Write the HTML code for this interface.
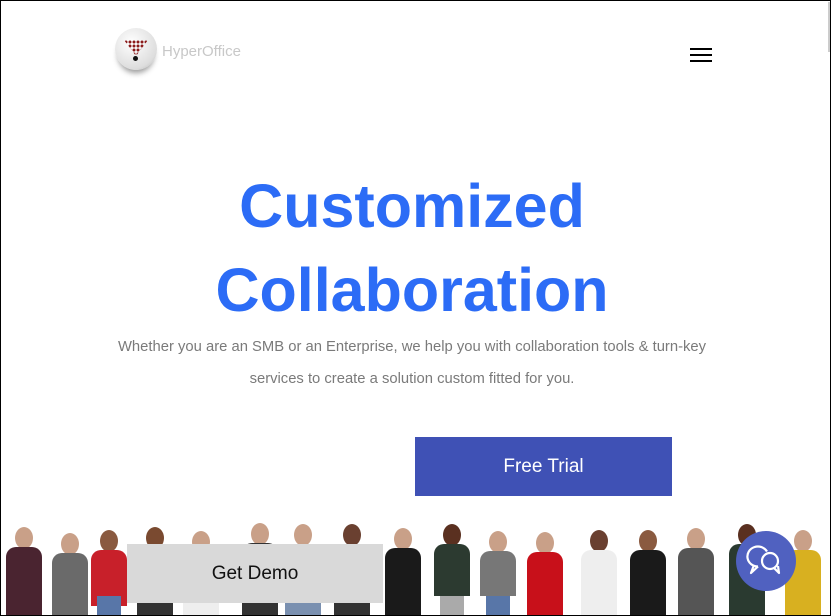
<!DOCTYPE html>
<html><head><style>
body{margin:0;width:831px;height:616px;overflow:hidden;background:#fff;font-family:"Liberation Sans",sans-serif;position:relative}
.frame{position:absolute;left:0;top:0;width:829px;height:614px;border:1px solid #000;pointer-events:none;z-index:10}
.a{position:absolute}
h1{position:absolute;left:0;width:824px;text-align:center;margin:0;color:#2c6cf6;font-size:61px;font-weight:bold;letter-spacing:0}
.sub{position:absolute;left:0;width:824px;text-align:center;color:#7a7a7a;font-size:14.8px;line-height:32px;top:331px}
.p{position:absolute}
.p .h{position:absolute;width:18px;height:22px;border-radius:50%;background:#c9a088;left:50%;margin-left:-9px}
.p .b{position:absolute;width:36px;left:50%;margin-left:-18px;border-radius:10px 10px 0 0}
.p .l{position:absolute;width:24px;left:50%;margin-left:-12px;height:20px;bottom:0;background:#5876a8}
</style></head><body>
<div class="frame"></div>
<div class="a" style="left:828px;top:2px;width:3px;height:50px;background:#ccc"></div>
<div class="a" style="left:115px;top:28px;width:42px;height:42px;border-radius:50%;background:radial-gradient(circle at 40% 35%,#fff,#ddd 70%,#aaa);box-shadow:0 6px 6px -3px #999"></div>
<div class="a" style="left:124px;top:40px;width:24px;height:16px;background:radial-gradient(#8b1a1a 1.3px,transparent 1.6px) 0 0/4px 4px;clip-path:polygon(0 0,100% 0,50% 100%)"></div>
<div class="a" style="left:133px;top:56px;width:5px;height:5px;border-radius:50%;background:#111"></div>
<div class="a" style="left:162px;top:43px;color:#c8c8c8;font-size:15px">HyperOffice</div>
<div class="a" style="left:690px;top:48px;width:22px;height:2px;background:#000;box-shadow:0 6px 0 #000,0 12px 0 #000"></div>
<h1 style="top:171px">Customized</h1>
<h1 style="top:255px">Collaboration</h1>
<div class="sub">Whether you are an SMB or an Enterprise, we help you with collaboration tools &amp; turn-key<br>services to create a solution custom fitted for you.</div>
<div class="a" style="left:415px;top:437px;width:257px;height:59px;background:#3f51b5;color:#fff;font-size:19px;line-height:59px;text-align:center;font-weight:500">Free Trial</div>

<div class="p" style="left:6px;top:527px;width:36px;height:89px"><div class="h"></div><div class="b" style="top:20px;height:69px;background:#4a2430"></div></div>
<div class="p" style="left:52px;top:533px;width:36px;height:83px"><div class="h"></div><div class="b" style="top:20px;height:63px;background:#6a6a6a"></div></div>
<div class="p" style="left:91px;top:530px;width:36px;height:86px"><div class="h" style="background:#8a5a40"></div><div class="b" style="top:20px;height:56px;background:#c8202a"></div><div class="l"></div></div>
<div class="p" style="left:137px;top:527px;width:36px;height:89px"><div class="h" style="background:#7a4a30"></div><div class="b" style="top:20px;height:69px;background:#333"></div></div>
<div class="p" style="left:183px;top:531px;width:36px;height:85px"><div class="h"></div><div class="b" style="top:20px;height:65px;background:#eee"></div></div>
<div class="p" style="left:242px;top:523px;width:36px;height:93px"><div class="h"></div><div class="b" style="top:20px;height:73px;background:#333"></div></div>
<div class="p" style="left:285px;top:524px;width:36px;height:92px"><div class="h"></div><div class="b" style="top:20px;height:72px;background:#7a90b0"></div></div>
<div class="p" style="left:334px;top:524px;width:36px;height:92px"><div class="h" style="background:#6a4030"></div><div class="b" style="top:20px;height:72px;background:#333"></div></div>
<div class="p" style="left:385px;top:528px;width:36px;height:88px"><div class="h"></div><div class="b" style="top:20px;height:68px;background:#1a1a1a"></div></div>
<div class="p" style="left:432px;top:524px;width:40px;height:92px"><div class="h" style="background:#5a3020"></div><div class="b" style="top:20px;height:52px;background:#2c3a30"></div><div class="l" style="background:#aaa"></div></div>
<div class="p" style="left:480px;top:531px;width:36px;height:85px"><div class="h"></div><div class="b" style="top:20px;height:45px;background:#777"></div><div class="l"></div></div>
<div class="p" style="left:527px;top:532px;width:36px;height:84px"><div class="h"></div><div class="b" style="top:20px;height:64px;background:#c8101a"></div></div>
<div class="p" style="left:581px;top:530px;width:36px;height:86px"><div class="h" style="background:#6a4030"></div><div class="b" style="top:20px;height:66px;background:#eee"></div></div>
<div class="p" style="left:630px;top:530px;width:36px;height:86px"><div class="h" style="background:#8a5a40"></div><div class="b" style="top:20px;height:66px;background:#1a1a1a"></div></div>
<div class="p" style="left:676px;top:528px;width:40px;height:88px"><div class="h"></div><div class="b" style="top:20px;height:68px;background:#555"></div></div>
<div class="p" style="left:729px;top:524px;width:36px;height:92px"><div class="h" style="background:#5a3020"></div><div class="b" style="top:20px;height:72px;background:#2a3a30"></div></div>
<div class="p" style="left:785px;top:530px;width:36px;height:86px"><div class="h"></div><div class="b" style="top:20px;height:66px;background:#d8b020"></div></div>

<div class="a" style="left:127px;top:544px;width:256px;height:59px;background:#d9d9d9;color:#111;font-size:19px;line-height:59px;text-align:center">Get Demo</div>
<div class="a" style="left:736px;top:531px;width:60px;height:60px;border-radius:50%;background:#5061c0">
<svg width="60" height="60" viewBox="0 0 60 60" fill="none" stroke="#fff" stroke-width="2.2" stroke-linejoin="round"><path d="M22 35.5A10.5 10 0 1 1 31 20.5"/><path d="M22 35.5L15 42l3-8"/><circle cx="34" cy="30" r="8"/><path d="M38 37l5 5-1-7"/></svg></div>
</body></html>
